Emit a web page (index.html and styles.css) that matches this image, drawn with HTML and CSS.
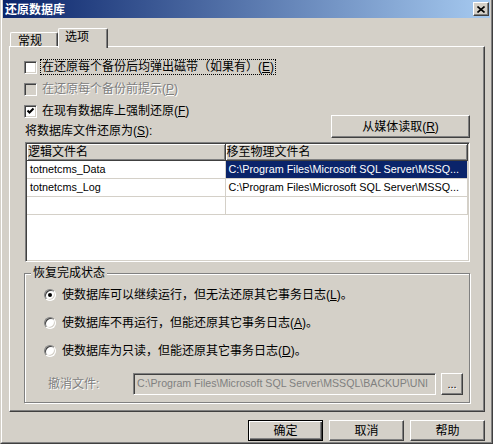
FILE: index.html
```html
<!DOCTYPE html>
<html lang="zh-CN">
<head>
    <meta charset="UTF-8">
    <title>还原数据库</title>
    <link rel="stylesheet" href="styles.css">
</head>
<body>
<div class="window">
    <div class="frame">
        <div class="titlebar">
            <span class="title">还原数据库</span>
            <span class="close-btn">
                <svg width="8" height="7" viewBox="0 0 8 7"><path d="M0.5 0.5 L7.5 6.5 M7.5 0.5 L0.5 6.5" stroke="#000" stroke-width="1.6" fill="none"/></svg>
            </span>
        </div>
        <div class="body">
            <div class="tabs">
                <div class="tab">常规</div>
                <div class="tab active">选项</div>
            </div>
            <div class="panel">
                <div class="check-row">
                    <span class="checkbox"></span>
                    <span class="label focus">在还原每个备份后均弹出磁带（如果有）(<u>E</u>)</span>
                </div>
                <div class="check-row disabled">
                    <span class="checkbox"></span>
                    <span class="label">在还原每个备份前提示(<u>P</u>)</span>
                </div>
                <div class="check-row">
                    <span class="checkbox">
                        <svg width="9" height="9" viewBox="0 0 9 9"><path d="M1.5 3.5 L3.5 5.5 L7.5 1.5" stroke="#000" stroke-width="2" fill="none"/></svg>
                    </span>
                    <span class="label">在现有数据库上强制还原(<u>F</u>)</span>
                </div>

                <div class="files-bar">
                    <span>将数据库文件还原为(<u>S</u>):</span>
                    <button class="btn media-btn">从媒体读取(<u>R</u>)</button>
                </div>

                <div class="grid">
                    <table>
                        <thead>
                            <tr>
                                <th class="col-logical">逻辑文件名</th>
                                <th>移至物理文件名</th>
                            </tr>
                        </thead>
                        <tbody>
                            <tr>
                                <td>totnetcms_Data</td>
                                <td class="selected">C:\Program Files\Microsoft SQL Server\MSSQ...</td>
                            </tr>
                            <tr>
                                <td>totnetcms_Log</td>
                                <td>C:\Program Files\Microsoft SQL Server\MSSQ...</td>
                            </tr>
                            <tr>
                                <td></td>
                                <td></td>
                            </tr>
                        </tbody>
                    </table>
                </div>

                <div class="group">
                    <span class="group-title">恢复完成状态</span>
                    <div class="radio-row">
                        <span class="radio on"></span>
                        <span>使数据库可以继续运行，但无法还原其它事务日志(<u>L</u>)。</span>
                    </div>
                    <div class="radio-row">
                        <span class="radio"></span>
                        <span>使数据库不再运行，但能还原其它事务日志(<u>A</u>)。</span>
                    </div>
                    <div class="radio-row">
                        <span class="radio"></span>
                        <span>使数据库为只读，但能还原其它事务日志(<u>D</u>)。</span>
                    </div>
                    <div class="undo-row">
                        <span class="undo-label">撤消文件:</span>
                        <span class="undo-input">C:\Program Files\Microsoft SQL Server\MSSQL\BACKUP\UNI</span>
                        <button class="btn browse-btn">...</button>
                    </div>
                </div>
            </div>

            <div class="actions">
                <button class="btn default">确定</button>
                <button class="btn">取消</button>
                <button class="btn">帮助</button>
            </div>
        </div>
    </div>
</div>
</body>
</html>
```

FILE: styles.css
```css
* {
    box-sizing: border-box;
}
html, body {
    margin: 0;
    padding: 0;
}
body {
    background: #d4d0c8;
    font: 12px/14px "Liberation Sans", "Noto Sans CJK SC", sans-serif;
    color: #000;
}
u {
    text-decoration: underline;
}

/* window frame */
.window {
    width: 493px;
    height: 444px;
    border-left: 1px solid #d4d0c8;
    border-right: 1px solid #404040;
    border-bottom: 1px solid #404040;
    overflow: hidden;
}
.frame {
    height: 100%;
    border-left: 1px solid #fff;
    border-right: 1px solid #808080;
    border-bottom: 1px solid #808080;
    padding: 0 1px 1px 1px;
}
.titlebar {
    height: 18px;
    display: flex;
    align-items: center;
    justify-content: space-between;
    padding: 0 1px 0 2px;
    background: linear-gradient(to right, #0a246a, #a6caf0);
}
.title {
    color: #fff;
    font-weight: bold;
    font-family: "Noto Sans CJK SC", sans-serif;
    font-size: 12px;
    line-height: 14px;
}
.close-btn {
    width: 16px;
    height: 14px;
    display: flex;
    align-items: center;
    justify-content: center;
    background: #d4d0c8;
    border: 1px solid;
    border-color: #fff #404040 #404040 #fff;
    box-shadow: inset -1px -1px #808080;
}

.body {
    padding: 10px 0 0 6px;
}

/* tabs */
.tabs {
    display: flex;
    align-items: flex-end;
    padding-left: 1px;
    height: 18px;
}
.tab {
    width: 48px;
    height: 14px;
    padding: 0 0 0 7px;
    line-height: 14px;
    border-top: 1px solid #fff;
    border-left: 1px solid #fff;
    border-right: 1px solid #404040;
    box-shadow: inset -1px 0 #808080;
    border-radius: 2px 2px 0 0;
    font-family: "Noto Sans CJK SC", sans-serif;
}
.tab.active {
    width: 50px;
    height: 20px;
    margin-bottom: -2px;
    padding-left: 6px;
    line-height: 13px;
    background: #d4d0c8;
    position: relative;
    z-index: 1;
}

.panel {
    width: 476px;
    border: 1px solid;
    border-color: #fff #404040 #404040 #fff;
    box-shadow: inset -1px -1px #808080;
    padding: 9px 14px 8px 14px;
}

/* checkboxes */
.check-row {
    height: 22px;
    display: flex;
    align-items: center;
}
.checkbox {
    width: 13px;
    height: 13px;
    flex: none;
    display: flex;
    align-items: center;
    justify-content: center;
    background: #fff;
    border: 1px solid;
    border-color: #808080 #fff #fff #808080;
    box-shadow: inset 1px 1px #404040, inset -1px -1px #d4d0c8;
    margin-right: 3px;
}
.label {
    border: 1px dotted transparent;
    padding: 0 1px;
    line-height: 14px;
}
.label.focus {
    border-color: #000;
}
.check-row.disabled .checkbox {
    background: #d4d0c8;
}
.check-row.disabled .label,
.undo-label,
.browse-btn {
    color: #808080;
    text-shadow: 1px 1px #fff;
}

.files-bar {
    display: flex;
    justify-content: space-between;
    align-items: flex-end;
    margin-top: -7px;
    padding-left: 1px;
}

/* buttons */
.btn {
    font: inherit;
    color: #000;
    background: #d4d0c8;
    border: 1px solid;
    border-color: #fff #404040 #404040 #fff;
    box-shadow: inset -1px -1px #808080;
    padding: 0;
    margin: 0;
}
.media-btn {
    width: 139px;
    height: 23px;
}

/* file grid */
.grid {
    margin: 4px 0 0 1px;
    height: 120px;
    background: #fff;
    border: 1px solid;
    border-color: #808080 #fff #fff #808080;
    padding: 1px;
    box-shadow: inset 1px 1px #404040, inset -1px -1px #d4d0c8;
    overflow: hidden;
}
.grid table {
    width: 100%;
    border-collapse: collapse;
    table-layout: fixed;
}
.grid th {
    height: 16px;
    padding: 0 0 0 1px;
    text-align: left;
    font-weight: normal;
    background: #d4d0c8;
    border-right: 1px solid #404040;
    border-bottom: 1px solid #404040;
    box-shadow: inset 1px 1px #fff, inset -1px -1px #808080;
    white-space: nowrap;
    overflow: hidden;
}
.grid th.col-logical {
    width: 198px;
}
.grid td {
    height: 18px;
    padding: 0 2px 0 3px;
    font-size: 10.8px;
    border-right: 1px solid #d4d0c8;
    border-bottom: 1px solid #d4d0c8;
    white-space: nowrap;
    overflow: hidden;
}
.grid td.selected {
    background: #0a246a;
    color: #fff;
}

/* group box */
.group {
    position: relative;
    margin-top: 11px;
    border: 1px solid #808080;
    box-shadow: inset 1px 1px #fff, 1px 1px #fff;
    padding: 7px 0 7px 19px;
}
.group-title {
    position: absolute;
    top: -8px;
    left: 6px;
    padding: 0 2px;
    background: #d4d0c8;
}
.radio-row {
    height: 28px;
    display: flex;
    align-items: center;
}
.radio {
    width: 12px;
    height: 12px;
    flex: none;
    margin-right: 6px;
    border-radius: 50%;
    background: #fff;
    border: 1px solid;
    border-color: #808080 #fff #fff #808080;
    box-shadow: inset 1px 1px #404040, inset -1px -1px #d4d0c8;
    display: flex;
    align-items: center;
    justify-content: center;
}
.radio.on::after {
    content: "";
    width: 4px;
    height: 4px;
    border-radius: 50%;
    background: #000;
}

.undo-row {
    margin-top: 8px;
    height: 22px;
    display: flex;
    align-items: center;
}
.undo-label {
    width: 89px;
    padding-left: 4px;
}
.undo-input {
    width: 303px;
    height: 22px;
    line-height: 18px;
    padding: 0 2px 0 3px;
    font-size: 10.6px;
    color: #808080;
    background: #d4d0c8;
    border: 1px solid;
    border-color: #808080 #fff #fff #808080;
    box-shadow: inset 1px 1px #404040, inset -1px -1px #d4d0c8;
    white-space: nowrap;
    overflow: hidden;
}
.browse-btn {
    width: 22px;
    height: 22px;
    margin-left: 5px;
    font-size: 11px;
    line-height: 18px;
}

/* dialog buttons */
.actions {
    display: flex;
    justify-content: flex-end;
    gap: 6px;
    margin-top: 8px;
    padding-right: 5px;
}
.actions .btn {
    width: 75px;
    height: 21px;
}
.actions .btn.default {
    border: 1px solid #000;
    box-shadow: inset 1px 1px #fff, inset -1px -1px #404040, inset -2px -2px #808080;
}
```
